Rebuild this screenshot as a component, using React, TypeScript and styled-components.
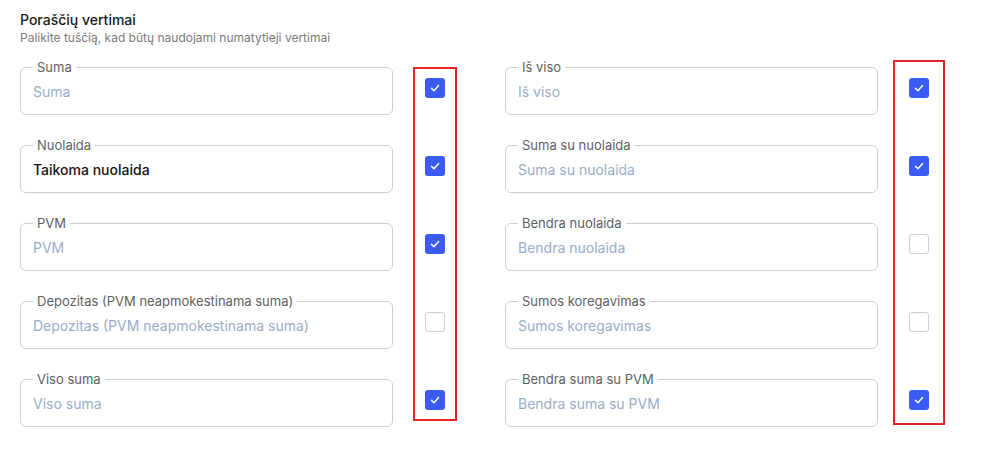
import React from 'react';
import styled, { createGlobalStyle } from 'styled-components';

const GlobalStyle = createGlobalStyle`
  html, body {
    margin: 0;
    padding: 0;
    background: #ffffff;
    font-family: Inter, "Noto Sans", "Liberation Sans", sans-serif;
  }
`

const Page = styled.div`
  padding: 11px 20px 0 20px;
`
const Title = styled.h3`
  margin: 0;
  font-size: 14px;
  font-weight: 500;
  line-height: 18px;
  color: #1b1b1b;
`
const Subtitle = styled.p`
  margin: 1px 0 0 0;
  font-size: 12px;
  line-height: 16px;
  color: #7a7a7a;
`
const Columns = styled.div`
  display: flex;
  margin-top: 21px;
  gap: 48px;
`
const Column = styled.div`
  display: flex;
  align-items: flex-start;
`
const Fields = styled.div`
  display: flex;
  flex-direction: column;
  gap: 30px;
  width: 373px;
`
const Field = styled.div`
  position: relative;
  box-sizing: border-box;
  height: 48px;
  border: 1px solid #cfcfcf;
  border-radius: 6px;
  display: flex;
  align-items: center;
  padding: 0 12px;
`
const Label = styled.span`
  position: absolute;
  top: -9px;
  left: 12px;
  padding: 0 4px;
  background: #ffffff;
  font-size: 13px;
  line-height: 16px;
  color: #5f5f5f;
`
const Value = styled.span<{ $filled?: boolean }>`
  font-size: 14px;
  font-weight: ${p => (p.$filled ? 500 : 400)};
  color: ${p => (p.$filled ? '#151515' : '#9badc9')};
`
const Marker = styled.div<{ $left: number; $width: number; $top: number; $bottom: number }>`
  box-sizing: border-box;
  margin-left: ${p => p.$left}px;
  margin-top: ${p => -p.$top}px;
  width: ${p => p.$width}px;
  border: 2px solid #e0262b;
  padding: ${p => p.$top + 9}px 0 ${p => p.$bottom}px 0;
  display: flex;
  flex-direction: column;
  align-items: center;
  gap: 58px;
`
const Box = styled.div<{ $checked: boolean }>`
  box-sizing: border-box;
  width: 20px;
  height: 20px;
  border-radius: 3px;
  display: flex;
  align-items: center;
  justify-content: center;
  background: ${p => (p.$checked ? '#3b5bf2' : '#ffffff')};
  border: ${p => (p.$checked ? 'none' : '1.5px solid #cfcfcf')};
`

type Row = { label: string; value: string; filled?: boolean; checked: boolean };

const left: Row[] = [
  { label: 'Suma', value: 'Suma', checked: true },
  { label: 'Nuolaida', value: 'Taikoma nuolaida', filled: true, checked: true },
  { label: 'PVM', value: 'PVM', checked: true },
  { label: 'Depozitas (PVM neapmokestinama suma)', value: 'Depozitas (PVM neapmokestinama suma)', checked: false },
  { label: 'Viso suma', value: 'Viso suma', checked: true },
];

const right: Row[] = [
  { label: 'Iš viso', value: 'Iš viso', checked: true },
  { label: 'Suma su nuolaida', value: 'Suma su nuolaida', checked: true },
  { label: 'Bendra nuolaida', value: 'Bendra nuolaida', checked: false },
  { label: 'Sumos koregavimas', value: 'Sumos koregavimas', checked: false },
  { label: 'Bendra suma su PVM', value: 'Bendra suma su PVM', checked: true },
];

function Check({ checked }: { checked: boolean }) {
  return (
    <Box $checked={checked}>
      {checked && (
        <svg width="12" height="12" viewBox="0 0 12 12" fill="none">
          <path d="M2.5 6.4 L5 8.7 L9.6 3.6" stroke="#ffffff" strokeWidth="1.5" strokeLinecap="round" strokeLinejoin="round" />
        </svg>
      )}
    </Box>
  );
}

function Group({ rows, marker }: { rows: Row[]; marker: { left: number; width: number; top: number; bottom: number } }) {
  return (
    <Column>
      <Fields>
        {rows.map(r => (
          <Field key={r.label}>
            <Label>{r.label}</Label>
            <Value $filled={r.filled}>{r.value}</Value>
          </Field>
        ))}
      </Fields>
      <Marker $left={marker.left} $width={marker.width} $top={marker.top} $bottom={marker.bottom}>
        {rows.map(r => (
          <Check key={r.label} checked={r.checked} />
        ))}
      </Marker>
    </Column>
  );
}

export default function App() {
  return (
    <Page>
      <GlobalStyle />
      <Title>Poraščių vertimai</Title>
      <Subtitle>Palikite tuščią, kad būtų naudojami numatytieji vertimai</Subtitle>
      <Columns>
        <Group rows={left} marker={{ left: 20, width: 44, top: 0, bottom: 9 }} />
        <Group rows={right} marker={{ left: 15, width: 52, top: 7, bottom: 13 }} />
      </Columns>
    </Page>
  );
}
